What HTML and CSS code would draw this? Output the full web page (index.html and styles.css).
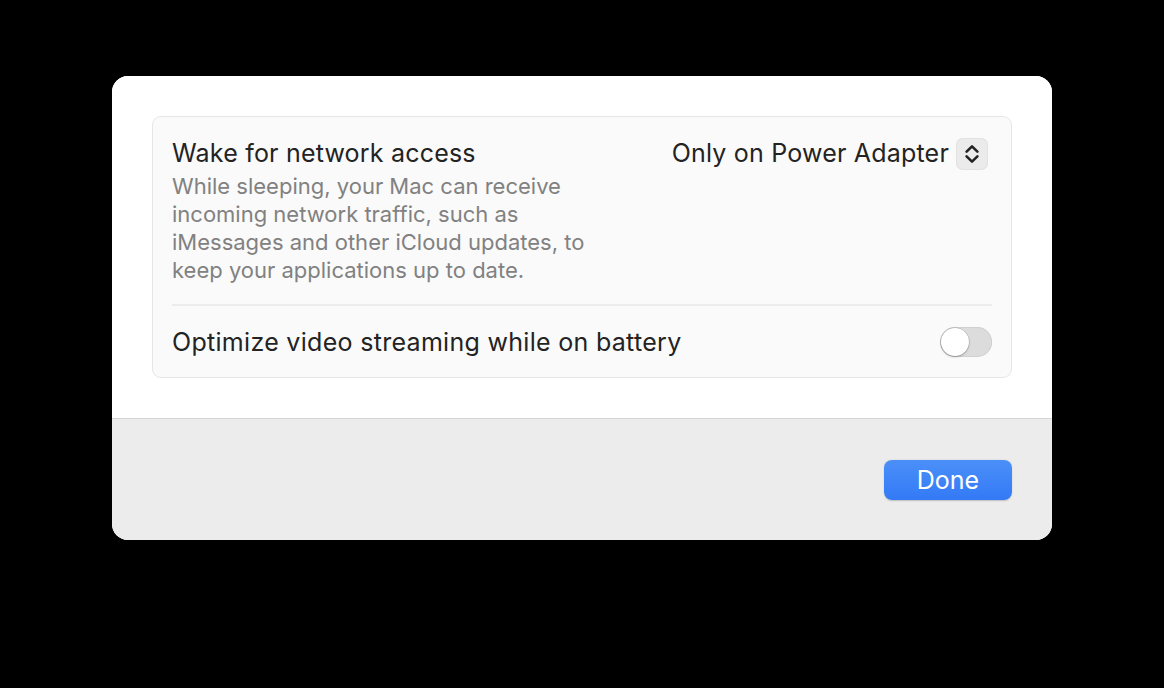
FILE: index.html
```html
<!DOCTYPE html>
<html>
<head>
<meta charset="utf-8">
<link rel="stylesheet" href="styles.css">
</head>
<body>
<div class="screen">
  <div class="dialog">
    <div class="content">
      <div class="card">
        <div class="row row-wake">
          <div class="wake-text">
            <div class="title">Wake for network access</div>
            <div class="desc">While sleeping, your Mac can receive incoming network traffic, such as iMessages and other iCloud updates, to keep your applications up to date.</div>
          </div>
          <div class="popup">
            <span class="popup-label">Only on Power Adapter</span>
            <span class="stepper">
              <svg width="18" height="24" viewBox="0 0 18 24"><path d="M3.6 9.6 L9 4.4 L14.4 9.6 M3.6 14.4 L9 19.6 L14.4 14.4" fill="none" stroke="#222" stroke-width="2.6" stroke-linecap="round" stroke-linejoin="round"/></svg>
            </span>
          </div>
        </div>
        <div class="sep"></div>
        <div class="row row-opt">
          <div class="title title-opt">Optimize video streaming while on battery</div>
          <div class="toggle"><div class="knob"></div></div>
        </div>
      </div>
    </div>
    <div class="footer">
      <button class="done">Done</button>
    </div>
  </div>
</div>
</body>
</html>
```
FILE: styles.css
```css
html, body {
  margin: 0;
  padding: 0;
  background: #000;
}
body {
  font-family: Inter, "Noto Sans", "Liberation Sans", sans-serif;
}
.screen {
  width: 1164px;
  height: 688px;
  padding-top: 76px;
  padding-left: 112px;
  box-sizing: border-box;
}
.dialog {
  width: 940px;
  height: 464px;
  border-radius: 16px;
  overflow: hidden;
  background: #fff;
  display: flex;
  flex-direction: column;
}
.content {
  height: 343px;
  padding: 40px 40px 0 40px;
  box-sizing: border-box;
  background: #fff;
  border-bottom: 1px solid #d6d6d6;
}
.card {
  height: 262px;
  box-sizing: border-box;
  background: #fafafa;
  border: 1px solid #e6e6e6;
  border-radius: 9px;
  padding: 0 19px;
}
.row {
  display: flex;
  justify-content: space-between;
}
.row-wake {
  padding-top: 20px;
  height: 187px;
  box-sizing: border-box;
}
.title {
  font-size: 25px;
  color: #232323;
  line-height: 32px;
  letter-spacing: 0.2px;
}
.title-opt {
  letter-spacing: 0.3px;
}
.desc {
  width: 430px;
  font-size: 22px;
  line-height: 28px;
  color: #818181;
  margin-top: 3px;
}
.popup {
  display: flex;
  align-items: flex-start;
  gap: 7px;
  padding-right: 4px;
}
.popup-label {
  font-size: 25px;
  line-height: 32px;
  letter-spacing: 0.2px;
  color: #232323;
}
.stepper {
  width: 32px;
  height: 32px;
  margin-top: 1px;
  background: #ebebeb;
  border-radius: 7px;
  display: flex;
  align-items: center;
  justify-content: center;
  box-shadow: inset 0 0 0 1px #e2e2e2;
}
.sep {
  height: 2px;
  background: #ececec;
}
.row-opt {
  align-items: center;
  height: 71px;
}
.toggle {
  width: 52px;
  height: 30px;
  border-radius: 15px;
  background: #dcdcdc;
  box-shadow: inset 0 0 0 1px #d0d0d0;
  position: relative;
}
.knob {
  position: absolute;
  left: 1px;
  top: 1px;
  width: 28px;
  height: 28px;
  border-radius: 50%;
  background: #fff;
  box-shadow: 0 0 0 0.5px rgba(0,0,0,0.18), 0 1px 2px rgba(0,0,0,0.25);
}
.footer {
  flex: 1;
  background: #ececec;
  display: flex;
  justify-content: flex-end;
  align-items: flex-start;
  padding: 41px 40px 0 0;
}
.done {
  width: 128px;
  height: 40px;
  border: none;
  border-radius: 8px;
  background: linear-gradient(#4b90f8, #3379f6);
  color: #fff;
  font-family: Inter, "Noto Sans", "Liberation Sans", sans-serif;
  font-size: 25px;
  line-height: 38px;
  padding: 0;
  box-shadow: 0 0.5px 1.5px rgba(0,0,0,0.2);
}
```
